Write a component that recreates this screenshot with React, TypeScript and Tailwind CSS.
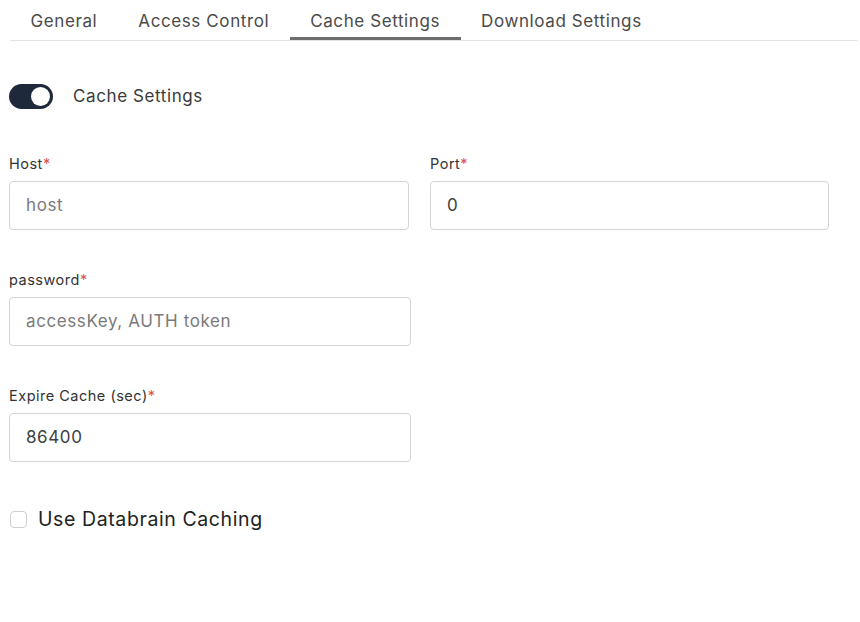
import React, { useState } from "react";

const tabs = ["General", "Access Control", "Cache Settings", "Download Settings"];

function Label({ text }: { text: string }) {
  return (
    <label className="block text-[14.5px] leading-4 tracking-[0.5px] text-[#333]">
      {text}
      <span className="text-[#d9534f]">*</span>
    </label>
  );
}

function Field({
  label,
  placeholder,
  value,
  width = "w-[400px]",
}: {
  label: string;
  placeholder?: string;
  value?: string;
  width?: string;
}) {
  return (
    <div className={`flex flex-col gap-[9px] ${width}`}>
      <Label text={label} />
      <input
        className="h-[49px] w-full rounded-[4px] border border-[#d4d4d4] bg-white px-4 text-[17px] tracking-[0.6px] text-[#3f3f3f] placeholder:text-[#7a7a7a] outline-none"
        placeholder={placeholder}
        defaultValue={value}
      />
    </div>
  );
}

export default function App() {
  const [active, setActive] = useState("Cache Settings");
  const [on, setOn] = useState(true);

  return (
    <div className="min-h-[622px] w-[860px] bg-white font-['Inter','Liberation_Sans',sans-serif]">
      <div className="ml-[10px] mr-[2px] flex border-b border-[#e4e4e4]">
        {tabs.map((t) => (
          <button
            key={t}
            onClick={() => setActive(t)}
            className={`h-[40px] px-[20.5px] pt-[7px] text-[17px] tracking-[0.6px] text-[#4a4a4a] ${
              active === t ? "-mb-px border-b-[3px] border-[#6e6e6e]" : "pb-[3px]"
            }`}
          >
            {t}
          </button>
        ))}
      </div>

      <div className="mt-[43px] flex items-center gap-[20px] pl-[9px]">
        <button
          onClick={() => setOn(!on)}
          className={`flex h-[25px] w-[44px] items-center rounded-full px-[3px] ${
            on ? "justify-end bg-[#1e293b]" : "justify-start bg-[#d1d5db]"
          }`}
        >
          <span className="h-[19px] w-[19px] rounded-full bg-white" />
        </button>
        <span className="text-[17px] tracking-[0.6px] text-[#3a3a3a]">Cache Settings</span>
      </div>

      <div className="mt-[46px] flex flex-col gap-[42px] pl-[9px]">
        <div className="flex gap-[21px]">
          <Field label="Host" placeholder="host" width="w-[400px]" />
          <Field label="Port" value="0" width="w-[399px]" />
        </div>
        <Field label="password" placeholder="accessKey, AUTH token" width="w-[402px]" />
        <Field label="Expire Cache (sec)" value="86400" width="w-[402px]" />
      </div>

      <label className="mt-[43px] flex items-center gap-[11px] pl-[10px]">
        <input
          type="checkbox"
          className="h-[17px] w-[17px] appearance-none rounded-[4px] border border-[#cfcfcf] bg-white"
        />
        <span className="text-[19.5px] tracking-[0.6px] text-[#222]">Use Databrain Caching</span>
      </label>
    </div>
  );
}
